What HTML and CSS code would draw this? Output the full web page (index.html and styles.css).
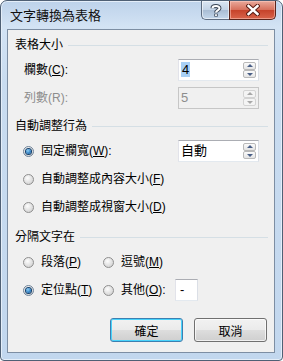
FILE: index.html
```html
<!DOCTYPE html>
<html lang="zh-Hant">

<head>
    <meta charset="UTF-8">
    <title>文字轉換為表格</title>
    <link rel="stylesheet" href="styles.css">
</head>

<body>
    <div class="window">
        <div class="titlebar">
            <div class="title">文字轉換為表格</div>
            <div class="caption-buttons">
                <div class="cap-btn help">
                    <svg width="12" height="13" viewBox="0 0 12 13">
                        <path d="M2.5 4.2 C2.5 1.5 9.5 1.2 9.5 4.3 C9.5 6.3 6 6.4 6 8.4" fill="none" stroke="#3b4656" stroke-width="4" />
                        <path d="M2.5 4.2 C2.5 1.5 9.5 1.2 9.5 4.3 C9.5 6.3 6 6.4 6 8.4" fill="none" stroke="#fff" stroke-width="2" />
                        <rect x="4.3" y="9.6" width="3.4" height="3" fill="#3b4656" />
                        <rect x="5" y="10.3" width="2" height="1.6" fill="#fff" />
                    </svg>
                </div>
                <div class="cap-btn close">
                    <svg width="14" height="12" viewBox="0 0 14 12">
                        <path d="M2.5 2 L11.5 10 M11.5 2 L2.5 10" stroke="#5a1d14" stroke-width="4.4" stroke-linecap="square" />
                        <path d="M2.5 2 L11.5 10 M11.5 2 L2.5 10" stroke="#fff" stroke-width="2.4" stroke-linecap="square" />
                    </svg>
                </div>
            </div>
        </div>

        <div class="client">
            <!-- 表格大小 -->
            <div class="group-header"><span>表格大小</span><i class="rule"></i></div>
            <div class="row row-first">
                <span class="field-label">欄數(<u>C</u>):</span>
                <div class="spin">
                    <span class="spin-value"><span class="selected">4</span></span>
                    <div class="spin-arrows">
                        <div class="arrow up"></div>
                        <div class="arrow down"></div>
                    </div>
                </div>
            </div>
            <div class="row disabled">
                <span class="field-label">列數(R):</span>
                <div class="spin">
                    <span class="spin-value">5</span>
                    <div class="spin-arrows">
                        <div class="arrow up"></div>
                        <div class="arrow down"></div>
                    </div>
                </div>
            </div>

            <!-- 自動調整行為 -->
            <div class="group-header"><span>自動調整行為</span><i class="rule"></i></div>
            <div class="row row-first radio-row">
                <span class="option option-wide"><i class="radio checked"></i>固定欄寬(<u>W</u>):</span>
                <div class="spin">
                    <span class="spin-value">自動</span>
                    <div class="spin-arrows">
                        <div class="arrow up"></div>
                        <div class="arrow down"></div>
                    </div>
                </div>
            </div>
            <div class="row radio-row">
                <span class="option"><i class="radio"></i>自動調整成內容大小(<u>F</u>)</span>
            </div>
            <div class="row radio-row">
                <span class="option"><i class="radio"></i>自動調整成視窗大小(<u>D</u>)</span>
            </div>

            <!-- 分隔文字在 -->
            <div class="group-header group-last"><span>分隔文字在</span><i class="rule"></i></div>
            <div class="row row-first radio-row">
                <span class="option option-short"><i class="radio"></i>段落(<u>P</u>)</span>
                <span class="option"><i class="radio"></i>逗號(<u>M</u>)</span>
            </div>
            <div class="row radio-row">
                <span class="option option-short"><i class="radio checked"></i>定位點(<u>T</u>)</span>
                <span class="option option-other"><i class="radio"></i>其他(<u>O</u>):</span>
                <span class="small-input">-</span>
            </div>

            <div class="buttons">
                <button class="btn default">確定</button>
                <button class="btn">取消</button>
            </div>
        </div>
    </div>
</body>

</html>
```

FILE: styles.css
```css
body {
    margin: 0;
    font-family: "Liberation Sans", "Noto Sans CJK TC", sans-serif;
    font-size: 12px;
    color: #000;
    background: #fff;
}

.window {
    box-sizing: border-box;
    width: 283px;
    height: 361px;
    border: 1px solid #4f6075;
    border-radius: 7px 7px 4px 4px;
    padding: 0 7px 7px 6px;
    background: linear-gradient(#bdd2ea, #d3e3f4 26px, #c9dcf0 80px, #c2d7ee);
    box-shadow: inset 0 0 0 1px #e4eef9;
}

.titlebar {
    height: 28px;
    display: flex;
    justify-content: space-between;
    align-items: flex-start;
}

.title {
    padding: 6px 0 0 3px;
    font-size: 13px;
    line-height: 17px;
    color: #111;
}

.caption-buttons {
    display: flex;
    margin-right: -1px;
}

.cap-btn {
    box-sizing: border-box;
    height: 19px;
    display: flex;
    align-items: center;
    justify-content: center;
    border: 1px solid #5d6c80;
    border-top: none;
}

.help {
    width: 28px;
    border-right: none;
    border-radius: 0 0 0 5px;
    background: linear-gradient(#dbe6f3, #c3d3e6 48%, #a9bdd4 52%, #c5d8ec);
    box-shadow: inset 0 0 0 1px rgba(255, 255, 255, 0.55);
}

.close {
    width: 47px;
    border-color: #5a241b;
    border-radius: 0 0 5px 0;
    background: linear-gradient(#e9a99b, #d7715d 48%, #c6432b 52%, #d9644b);
    box-shadow: inset 0 0 0 1px rgba(255, 210, 200, 0.5);
}

.client {
    box-sizing: border-box;
    height: 324px;
    border: 1px solid #7d8ea3;
    background: #f0f0f0;
    padding: 7px 6px 0 0;
}

.group-header {
    display: flex;
    align-items: center;
    height: 16px;
    padding-left: 7px;
    margin-top: 6px;
    line-height: 16px;
}

.group-header:first-child {
    margin-top: 0;
}

.group-last {
    margin-top: 8px;
}

.rule {
    flex: 1;
    height: 1px;
    margin-left: 5px;
    background: #d5dfe5;
}

.row {
    display: flex;
    align-items: center;
    height: 28px;
    padding-left: 16px;
    line-height: 16px;
}

.row-first {
    margin-top: 3px;
}

.radio-row {
    padding-left: 15px;
}

.field-label {
    width: 154px;
}

.disabled {
    color: #8d8d8d;
}

.spin {
    box-sizing: border-box;
    width: 81px;
    height: 22px;
    display: flex;
    align-items: center;
    justify-content: space-between;
    border: 1px solid #abadb3;
    border-color: #abadb3 #dbdfe6 #e3e9ef #e2e3ea;
    background: #fff;
    padding: 0 2px 0 2px;
}

.spin-value {
    font-size: 13px;
}

.selected {
    background: #a8d0f5;
    padding: 0 1px;
}

.disabled .spin {
    background: #f0f0f0;
    border-color: #c6c6c6;
}

.spin-arrows {
    display: flex;
    flex-direction: column;
}

.arrow {
    box-sizing: border-box;
    width: 13px;
    height: 8px;
    border: 1px solid #b9b9b9;
    border-radius: 2px;
    background: linear-gradient(#fbfbfb, #e4e4e4);
    position: relative;
}

.arrow::after {
    content: "";
    position: absolute;
    left: 3px;
    border-left: 3px solid transparent;
    border-right: 3px solid transparent;
}

.up::after {
    top: 1px;
    border-bottom: 3px solid #4a5f86;
}

.down::after {
    top: 2px;
    border-top: 3px solid #4a5f86;
}

.disabled .arrow {
    border-color: #d3d3d3;
    background: #f4f4f4;
}

.disabled .up::after {
    border-bottom-color: #a8a8a8;
}

.disabled .down::after {
    border-top-color: #a8a8a8;
}

.option {
    display: flex;
    align-items: center;
}

.option-wide {
    width: 155px;
}

.option-short {
    width: 80px;
}

.option-other {
    width: 74px;
}

.radio {
    box-sizing: border-box;
    width: 11px;
    height: 11px;
    margin-right: 7px;
    border-radius: 50%;
    border: 1px solid #8f8f8f;
    background: radial-gradient(circle at 40% 35%, #fdfdfd, #d8d8d8 70%, #c5c5c5);
    display: flex;
    align-items: center;
    justify-content: center;
}

.radio.checked {
    border-color: #6f8399;
}

.radio.checked::after {
    content: "";
    width: 5px;
    height: 5px;
    border-radius: 50%;
    background: radial-gradient(circle at 40% 35%, #8fd0f6, #2c7cc0 60%, #174f84);
    box-shadow: 0 0 0 1px #15406b;
}

.small-input {
    box-sizing: border-box;
    width: 23px;
    height: 22px;
    border: 1px solid #abadb3;
    border-color: #abadb3 #dbdfe6 #e3e9ef #e2e3ea;
    background: #fff;
    padding: 2px 0 0 4px;
    margin-left: -2px;
    font-size: 13px;
}

.buttons {
    display: flex;
    justify-content: flex-end;
    gap: 11px;
    margin-top: 14px;
    padding-right: 1px;
}

.btn {
    box-sizing: border-box;
    width: 73px;
    height: 24px;
    border: 1px solid #707070;
    border-radius: 3px;
    background: linear-gradient(#f2f2f2, #ebebeb 48%, #dddddd 52%, #cfcfcf);
    box-shadow: inset 0 0 0 1px rgba(255, 255, 255, 0.7);
    font-family: inherit;
    font-size: 12px;
    padding: 0;
    color: #000;
}

.btn.default {
    border-color: #3c7fb1;
    box-shadow: inset 0 0 0 1px #48d3fb;
}
```
